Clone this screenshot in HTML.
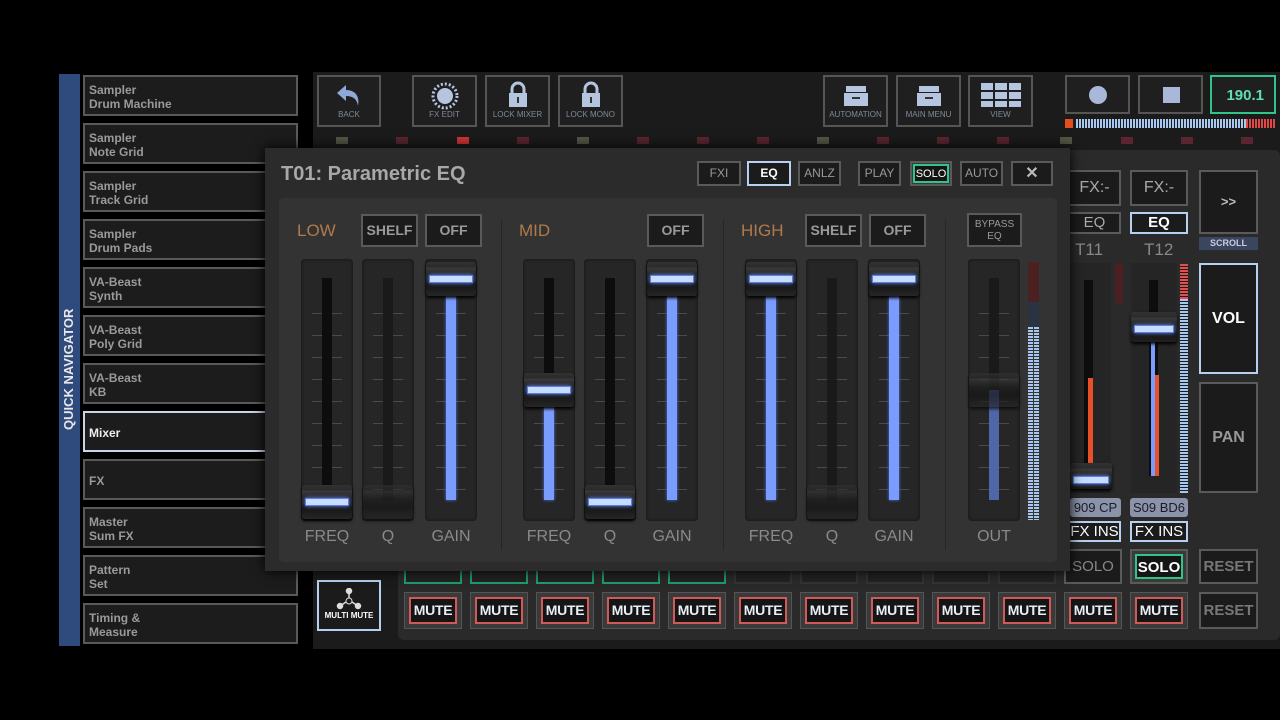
<!DOCTYPE html>
<html><head><meta charset="utf-8"><style>
*{box-sizing:border-box;margin:0;padding:0}
body{width:1280px;height:720px;background:#000;position:relative;overflow:hidden;font-family:"Liberation Sans",sans-serif;color:#ddd}
.a{position:absolute}
.nav{position:absolute;left:83px;width:215px;height:41px;background:#1c1c1c;border:2px solid #5a5a5a;color:#9a9a9a;font-size:12px;font-weight:bold;line-height:14px;padding:6px 0 0 4px}
.tb{position:absolute;background:#1f1f1f;border:2px solid #555;color:#7f8a9a;font-size:8px;text-align:center}
.tb span{position:absolute;left:0;right:0;bottom:6px}
.btn{position:absolute;background:#1b1b1b;border:2px solid #5a5a5a;color:#9a9a9a;font-weight:bold;font-size:13px;text-align:center}
.trk{position:absolute;top:259px;width:52px;height:262px;background:#262626;border-radius:4px;box-shadow:inset 0 0 3px #111}
.tk{position:absolute;left:11px;width:30px;top:33px;height:200px;background:repeating-linear-gradient(#262626 0 21px,#4a4a4a 21px 22px,#262626 22px 22px)}
.tk::after{content:"";position:absolute;left:10px;width:10px;top:0;bottom:0;background:#262626}
.ln{position:absolute;left:21px;width:10px;top:19px;height:222px;background:#0d0d0d}
.fl{position:absolute;left:21px;width:10px;background:#7b9cff;box-shadow:0 0 3px #5577ee}
.hd{position:absolute;left:1px;width:50px;height:34px;background:linear-gradient(#333 0,#2a2a2a 5px,#3a3a3a 6px,#1e1e1e 14px,#141414 22px,#262626 34px);border-radius:3px;box-shadow:0 2px 3px #000}
.hd::after{content:"";position:absolute;left:3px;right:3px;top:13px;height:6px;background:#c8dcff;box-shadow:0 0 4px #6d8fff;border:1px solid #5b7fe0}
.hd.dim::after{display:none}
.lbl{position:absolute;top:528px;width:60px;text-align:center;color:#8a8a8a;font-size:16px}
.mute{position:absolute;top:592px;width:58px;height:37px;background:#3a3a3a;border:1px solid #555;padding:4px}
.mute div{width:100%;height:100%;border:2px solid #d05a5a;background:#151515;color:#e8eef5;font-weight:bold;font-size:14px;text-align:center;line-height:23px;letter-spacing:-0.3px}
.gs{position:absolute;top:570px;width:58px;height:14px;border:2px solid #333;border-top:none;background:#222}
.gs.g{border-color:#1f9b6a}
.mk{position:absolute;top:137px;width:12px;height:7px;background:#5a2530}
</style></head><body>

<div class="a" style="left:59px;top:74px;width:21px;height:572px;background:#2f4a7c"></div>
<div class="a" style="left:61px;top:430px;transform:rotate(-90deg);transform-origin:0 0;color:#e8e8e8;font-weight:bold;font-size:13px;white-space:nowrap;width:140px">QUICK NAVIGATOR</div>
<div class="nav" style="top:75px">Sampler<br>Drum Machine</div>
<div class="nav" style="top:123px">Sampler<br>Note Grid</div>
<div class="nav" style="top:171px">Sampler<br>Track Grid</div>
<div class="nav" style="top:219px">Sampler<br>Drum Pads</div>
<div class="nav" style="top:267px">VA-Beast<br>Synth</div>
<div class="nav" style="top:315px">VA-Beast<br>Poly Grid</div>
<div class="nav" style="top:363px">VA-Beast<br>KB</div>
<div class="nav" style="top:411px;border-color:#c8d4e8;color:#eee;padding-top:13px">Mixer</div>
<div class="nav" style="top:459px;padding-top:13px">FX</div>
<div class="nav" style="top:507px">Master<br>Sum FX</div>
<div class="nav" style="top:555px">Pattern<br>Set</div>
<div class="nav" style="top:603px">Timing &amp;<br>Measure</div>

<div class="a" style="left:313px;top:72px;width:967px;height:577px;background:#1b1b1b"></div>
<div class="a" style="left:398px;top:150px;width:882px;height:490px;background:#2a2a2a;border-radius:6px"></div>

<div class="tb" style="left:317px;top:75px;width:64px;height:52px"><svg width="30" height="28" viewBox="0 0 30 28" style="margin-top:5px"><path d="M12 3 L3 11 L12 19 L12 14 C19 14 23 17 24 24 C26 14 21 8 12 8 Z" fill="#8fa8d8"/></svg><span>BACK</span></div>
<div class="tb" style="left:412px;top:75px;width:65px;height:52px"><svg width="30" height="28" viewBox="0 0 30 28" style="margin-top:5px"><circle cx="15" cy="14" r="8" fill="#b5c5e0"/><circle cx="15" cy="14" r="12" fill="none" stroke="#b5c5e0" stroke-width="3" stroke-dasharray="2 2"/></svg><span>FX EDIT</span></div>
<div class="tb" style="left:485px;top:75px;width:65px;height:52px"><svg width="24" height="28" viewBox="0 0 24 28" style="margin-top:4px"><path d="M6 12 V8 a6 6 0 0 1 12 0 V12" fill="none" stroke="#b5c5e0" stroke-width="3"/><rect x="3" y="12" width="18" height="14" fill="#b5c5e0"/><rect x="11" y="16" width="2" height="6" fill="#333"/></svg><span>LOCK MIXER</span></div>
<div class="tb" style="left:558px;top:75px;width:65px;height:52px"><svg width="24" height="28" viewBox="0 0 24 28" style="margin-top:4px"><path d="M6 12 V8 a6 6 0 0 1 12 0 V12" fill="none" stroke="#b5c5e0" stroke-width="3"/><rect x="3" y="12" width="18" height="14" fill="#b5c5e0"/><rect x="11" y="16" width="2" height="6" fill="#333"/></svg><span>LOCK MONO</span></div>
<div class="tb" style="left:823px;top:75px;width:65px;height:52px"><svg width="26" height="24" viewBox="0 0 26 24" style="margin-top:7px"><rect x="3" y="2" width="20" height="6" fill="#b5c5e0"/><rect x="1" y="9" width="24" height="13" fill="#b5c5e0"/><rect x="9" y="13" width="8" height="2" fill="#333"/></svg><span>AUTOMATION</span></div>
<div class="tb" style="left:896px;top:75px;width:65px;height:52px"><svg width="26" height="24" viewBox="0 0 26 24" style="margin-top:7px"><rect x="3" y="2" width="20" height="6" fill="#b5c5e0"/><rect x="1" y="9" width="24" height="13" fill="#b5c5e0"/><rect x="9" y="13" width="8" height="2" fill="#333"/></svg><span>MAIN MENU</span></div>
<div class="tb" style="left:968px;top:75px;width:65px;height:52px"><svg width="40" height="24" viewBox="0 0 40 24" style="margin-top:6px"><g fill="#b5c5e0"><rect x="0" y="0" width="12" height="7"/><rect x="14" y="0" width="12" height="7"/><rect x="28" y="0" width="12" height="7"/><rect x="0" y="9" width="12" height="7"/><rect x="14" y="9" width="12" height="7"/><rect x="28" y="9" width="12" height="7"/><rect x="0" y="18" width="12" height="6"/><rect x="14" y="18" width="12" height="6"/><rect x="28" y="18" width="12" height="6"/></g></svg><span>VIEW</span></div>
<div class="tb" style="left:1065px;top:75px;width:65px;height:39px"><div class="a" style="left:22px;top:9px;width:18px;height:18px;border-radius:50%;background:#a9b8d8"></div></div>
<div class="tb" style="left:1138px;top:75px;width:65px;height:39px"><div class="a" style="left:23px;top:10px;width:17px;height:16px;background:#a9b8d8"></div></div>
<div class="tb" style="left:1210px;top:75px;width:66px;height:39px;border-color:#2fc58a;color:#5fe0b0;font-size:15px;font-weight:bold;text-align:right;padding:10px 10px 0 0">190.1</div>
<div class="a" style="left:1065px;top:119px;width:8px;height:9px;background:#e0501e"></div>
<div class="a" style="left:1076px;top:119px;width:170px;height:9px;background:repeating-linear-gradient(90deg,#a8c8f0 0 2px,#1b1b1b 2px 3px)"></div>
<div class="a" style="left:1246px;top:119px;width:30px;height:9px;background:repeating-linear-gradient(90deg,#e04848 0 2px,#1b1b1b 2px 3px)"></div>
<div class="mk" style="left:336px;background:#554"></div><div class="mk" style="left:396px"></div><div class="mk" style="left:457px;background:#c33"></div><div class="mk" style="left:517px"></div><div class="mk" style="left:577px;background:#554"></div><div class="mk" style="left:637px"></div><div class="mk" style="left:697px"></div><div class="mk" style="left:757px"></div><div class="mk" style="left:817px;background:#554"></div><div class="mk" style="left:877px"></div><div class="mk" style="left:937px"></div><div class="mk" style="left:997px"></div><div class="mk" style="left:1060px;background:#554"></div><div class="mk" style="left:1121px"></div><div class="mk" style="left:1181px"></div><div class="mk" style="left:1241px"></div>

<div class="btn" style="left:1068px;top:170px;width:53px;height:36px;font-size:16px;font-weight:normal;line-height:32px;color:#aaa">FX:-</div>
<div class="btn" style="left:1130px;top:170px;width:58px;height:36px;font-size:16px;font-weight:normal;line-height:32px;color:#aaa">FX:-</div>
<div class="btn" style="left:1068px;top:212px;width:53px;height:22px;font-size:15px;font-weight:normal;line-height:18px;color:#aaa">EQ</div>
<div class="btn" style="left:1130px;top:212px;width:58px;height:22px;font-size:15px;line-height:18px;color:#fff;border-color:#b8d0f0">EQ</div>
<div class="a" style="left:1075px;top:240px;color:#888;font-size:17px">T11</div>
<div class="a" style="left:1144px;top:240px;color:#888;font-size:17px">T12</div>
<div class="a" style="left:1070px;top:263px;width:41px;height:230px;background:#252525"></div>
<div class="a" style="left:1084px;top:280px;width:9px;height:190px;background:#0d0d0d"></div>
<div class="a" style="left:1088px;top:378px;width:5px;height:92px;background:#e8502a"></div>
<div class="a" style="left:1115px;top:263px;width:8px;height:40px;background:#4a2020"></div>
<div class="hd" style="left:1070px;top:463px;width:42px;height:26px"></div>
<div class="a" style="left:1131px;top:263px;width:46px;height:230px;background:#252525"></div>
<div class="a" style="left:1149px;top:280px;width:9px;height:196px;background:#0d0d0d"></div>
<div class="a" style="left:1151px;top:340px;width:4px;height:136px;background:#7b9cff"></div>
<div class="a" style="left:1155px;top:375px;width:4px;height:101px;background:#e8502a"></div>
<div class="hd" style="left:1131px;top:312px;width:46px;height:30px"></div>
<div class="a" style="left:1180px;top:264px;width:8px;height:35px;background:repeating-linear-gradient(#e05050 0 2px,#1b1b1b 2px 3px)"></div>
<div class="a" style="left:1180px;top:299px;width:8px;height:194px;background:repeating-linear-gradient(#a8c8f0 0 2px,#1b1b1b 2px 3px)"></div>
<div class="a" style="left:1070px;top:498px;width:51px;height:19px;background:#8a93a8;border-radius:3px;color:#1a1a2a;font-size:13px;text-align:center;line-height:19px">909 CP</div>
<div class="a" style="left:1130px;top:498px;width:58px;height:19px;background:#8a93a8;border-radius:3px;color:#1a1a2a;font-size:13px;text-align:center;line-height:19px">S09 BD6</div>
<div class="btn" style="left:1068px;top:521px;width:53px;height:21px;border-color:#b8d0f0;color:#fff;font-size:15px;line-height:17px;font-weight:normal">FX INS</div>
<div class="btn" style="left:1130px;top:521px;width:58px;height:21px;border-color:#b8d0f0;color:#fff;font-size:15px;line-height:17px;font-weight:normal">FX INS</div>
<div class="btn" style="left:1064px;top:549px;width:58px;height:35px;line-height:31px;font-size:15px;color:#888;font-weight:normal">SOLO</div>
<div class="btn" style="left:1130px;top:549px;width:58px;height:35px;background:#3a3a3a;padding:3px"><div style="border:2px solid #2fc58a;background:#151515;color:#fff;height:100%;line-height:24px;font-size:15px">SOLO</div></div>
<div class="btn" style="left:1199px;top:170px;width:59px;height:64px;line-height:60px;color:#bbb">&gt;&gt;</div>
<div class="a" style="left:1199px;top:237px;width:59px;height:13px;background:#3a4560;color:#ccd;font-size:9px;text-align:center;line-height:13px;font-weight:bold">SCROLL</div>
<div class="btn" style="left:1199px;top:263px;width:59px;height:111px;line-height:107px;color:#fff;font-size:16px;border-color:#b8d0f0">VOL</div>
<div class="btn" style="left:1199px;top:382px;width:59px;height:111px;line-height:107px;color:#999;font-size:16px">PAN</div>
<div class="btn" style="left:1199px;top:549px;width:59px;height:35px;line-height:31px;color:#777;font-size:15px">RESET</div>
<div class="btn" style="left:1199px;top:592px;width:59px;height:37px;line-height:33px;color:#777;font-size:15px">RESET</div>

<div class="btn" style="left:317px;top:580px;width:64px;height:51px;border-color:#b8d0f0;font-size:8px;color:#fff"><svg width="26" height="22" viewBox="0 0 26 22" style="margin-top:6px"><g fill="#ddd" stroke="#ddd" stroke-width="1.5"><circle cx="13" cy="3" r="2.5"/><circle cx="4" cy="18" r="2.5"/><circle cx="22" cy="18" r="2.5"/><line x1="13" y1="3" x2="13" y2="12"/><line x1="4" y1="18" x2="13" y2="12"/><line x1="22" y1="18" x2="13" y2="12"/></g><circle cx="13" cy="13" r="3" fill="#1b1b1b" stroke="#ddd"/></svg><div style="margin-top:-1px">MULTI MUTE</div></div>
<div class="gs g" style="left:404px"></div><div class="gs g" style="left:470px"></div><div class="gs g" style="left:536px"></div><div class="gs g" style="left:602px"></div><div class="gs g" style="left:668px"></div><div class="gs" style="left:734px"></div><div class="gs" style="left:800px"></div><div class="gs" style="left:866px"></div><div class="gs" style="left:932px"></div><div class="gs" style="left:998px"></div>
<div class="mute" style="left:404px"><div>MUTE</div></div><div class="mute" style="left:470px"><div>MUTE</div></div><div class="mute" style="left:536px"><div>MUTE</div></div><div class="mute" style="left:602px"><div>MUTE</div></div><div class="mute" style="left:668px"><div>MUTE</div></div><div class="mute" style="left:734px"><div>MUTE</div></div><div class="mute" style="left:800px"><div>MUTE</div></div><div class="mute" style="left:866px"><div>MUTE</div></div><div class="mute" style="left:932px"><div>MUTE</div></div><div class="mute" style="left:998px"><div>MUTE</div></div><div class="mute" style="left:1064px"><div>MUTE</div></div><div class="mute" style="left:1130px"><div>MUTE</div></div>

<div class="a" style="left:265px;top:148px;width:805px;height:423px;background:#2b2b2b;box-shadow:0 0 12px #000"></div>
<div class="a" style="left:281px;top:163px;color:#a8a8a8;font-size:20px;font-weight:bold">T01: Parametric EQ</div>
<div class="btn" style="left:697px;top:161px;width:44px;height:25px;line-height:21px;font-size:12px;font-weight:normal;color:#999">FXI</div>
<div class="btn" style="left:747px;top:161px;width:44px;height:25px;line-height:21px;font-size:12px;color:#fff;border-color:#b8d0f0">EQ</div>
<div class="btn" style="left:798px;top:161px;width:43px;height:25px;line-height:21px;font-size:12px;font-weight:normal;color:#999">ANLZ</div>
<div class="btn" style="left:858px;top:161px;width:43px;height:25px;line-height:21px;font-size:12px;font-weight:normal;color:#999">PLAY</div>
<div class="btn" style="left:910px;top:161px;width:42px;height:25px;background:#3a3a3a;padding:1px"><div style="border:2px solid #2fc58a;background:#151515;color:#fff;height:100%;line-height:17px;font-size:11px;font-weight:normal">SOLO</div></div>
<div class="btn" style="left:960px;top:161px;width:43px;height:25px;line-height:21px;font-size:12px;font-weight:normal;color:#999">AUTO</div>
<div class="btn" style="left:1011px;top:161px;width:42px;height:25px;line-height:21px;font-size:16px;color:#bbb">✕</div>
<div class="a" style="left:279px;top:198px;width:778px;height:364px;background:#333;border-radius:5px"></div>
<div class="a" style="left:501px;top:220px;width:1px;height:330px;background:#262626"></div>
<div class="a" style="left:723px;top:220px;width:1px;height:330px;background:#262626"></div>
<div class="a" style="left:945px;top:220px;width:1px;height:330px;background:#262626"></div>

<div class="a" style="left:297px;top:221px;color:#b07a4a;font-size:17px">LOW</div>
<div class="a" style="left:519px;top:221px;color:#b07a4a;font-size:17px">MID</div>
<div class="a" style="left:741px;top:221px;color:#b07a4a;font-size:17px">HIGH</div>
<div class="btn" style="left:361px;top:214px;width:57px;height:33px;line-height:29px;font-size:14px">SHELF</div>
<div class="btn" style="left:425px;top:214px;width:57px;height:33px;line-height:29px;font-size:14px">OFF</div>
<div class="btn" style="left:647px;top:214px;width:57px;height:33px;line-height:29px;font-size:14px">OFF</div>
<div class="btn" style="left:805px;top:214px;width:57px;height:33px;line-height:29px;font-size:14px">SHELF</div>
<div class="btn" style="left:869px;top:214px;width:57px;height:33px;line-height:29px;font-size:14px">OFF</div>
<div class="btn" style="left:967px;top:213px;width:55px;height:34px;font-size:10px;font-weight:normal;line-height:12px;padding-top:4px">BYPASS<br>EQ</div>

<div class="trk" style="left:301px"><div class="tk"></div><div class="ln"></div><div class="hd" style="top:226px"></div></div>
<div class="trk" style="left:362px"><div class="tk"></div><div class="ln" style="background:#1a1a1a"></div><div class="hd dim" style="top:226px;opacity:.6"></div></div>
<div class="trk" style="left:425px"><div class="tk"></div><div class="ln"></div><div class="fl" style="top:37px;height:204px"></div><div class="hd" style="top:3px"></div></div>
<div class="trk" style="left:523px"><div class="tk"></div><div class="ln"></div><div class="fl" style="top:148px;height:93px"></div><div class="hd" style="top:114px"></div></div>
<div class="trk" style="left:584px"><div class="tk"></div><div class="ln"></div><div class="hd" style="top:226px"></div></div>
<div class="trk" style="left:646px"><div class="tk"></div><div class="ln"></div><div class="fl" style="top:37px;height:204px"></div><div class="hd" style="top:3px"></div></div>
<div class="trk" style="left:745px"><div class="tk"></div><div class="ln"></div><div class="fl" style="top:37px;height:204px"></div><div class="hd" style="top:3px"></div></div>
<div class="trk" style="left:806px"><div class="tk"></div><div class="ln" style="background:#1a1a1a"></div><div class="hd dim" style="top:226px;opacity:.6"></div></div>
<div class="trk" style="left:868px"><div class="tk"></div><div class="ln"></div><div class="fl" style="top:37px;height:204px"></div><div class="hd" style="top:3px"></div></div>
<div class="trk" style="left:968px"><div class="tk"></div><div class="ln" style="background:#1a1a1a"></div><div class="fl" style="top:131px;height:110px;background:#4f66a8;box-shadow:none"></div><div class="hd dim" style="top:114px;opacity:.7"></div></div>
<div class="a" style="left:1028px;top:262px;width:11px;height:40px;background:#4a2020"></div>
<div class="a" style="left:1028px;top:302px;width:11px;height:25px;background:#2a3440"></div>
<div class="a" style="left:1028px;top:327px;width:11px;height:193px;background:repeating-linear-gradient(#a8c8f0 0 2px,#333 2px 3px)"></div>
<div class="a" style="left:1033px;top:327px;width:1px;height:193px;background:#333"></div>

<div class="lbl" style="left:297px">FREQ</div><div class="lbl" style="left:358px">Q</div><div class="lbl" style="left:421px">GAIN</div>
<div class="lbl" style="left:519px">FREQ</div><div class="lbl" style="left:580px">Q</div><div class="lbl" style="left:642px">GAIN</div>
<div class="lbl" style="left:741px">FREQ</div><div class="lbl" style="left:802px">Q</div><div class="lbl" style="left:864px">GAIN</div>
<div class="lbl" style="left:964px">OUT</div>
</body></html>
